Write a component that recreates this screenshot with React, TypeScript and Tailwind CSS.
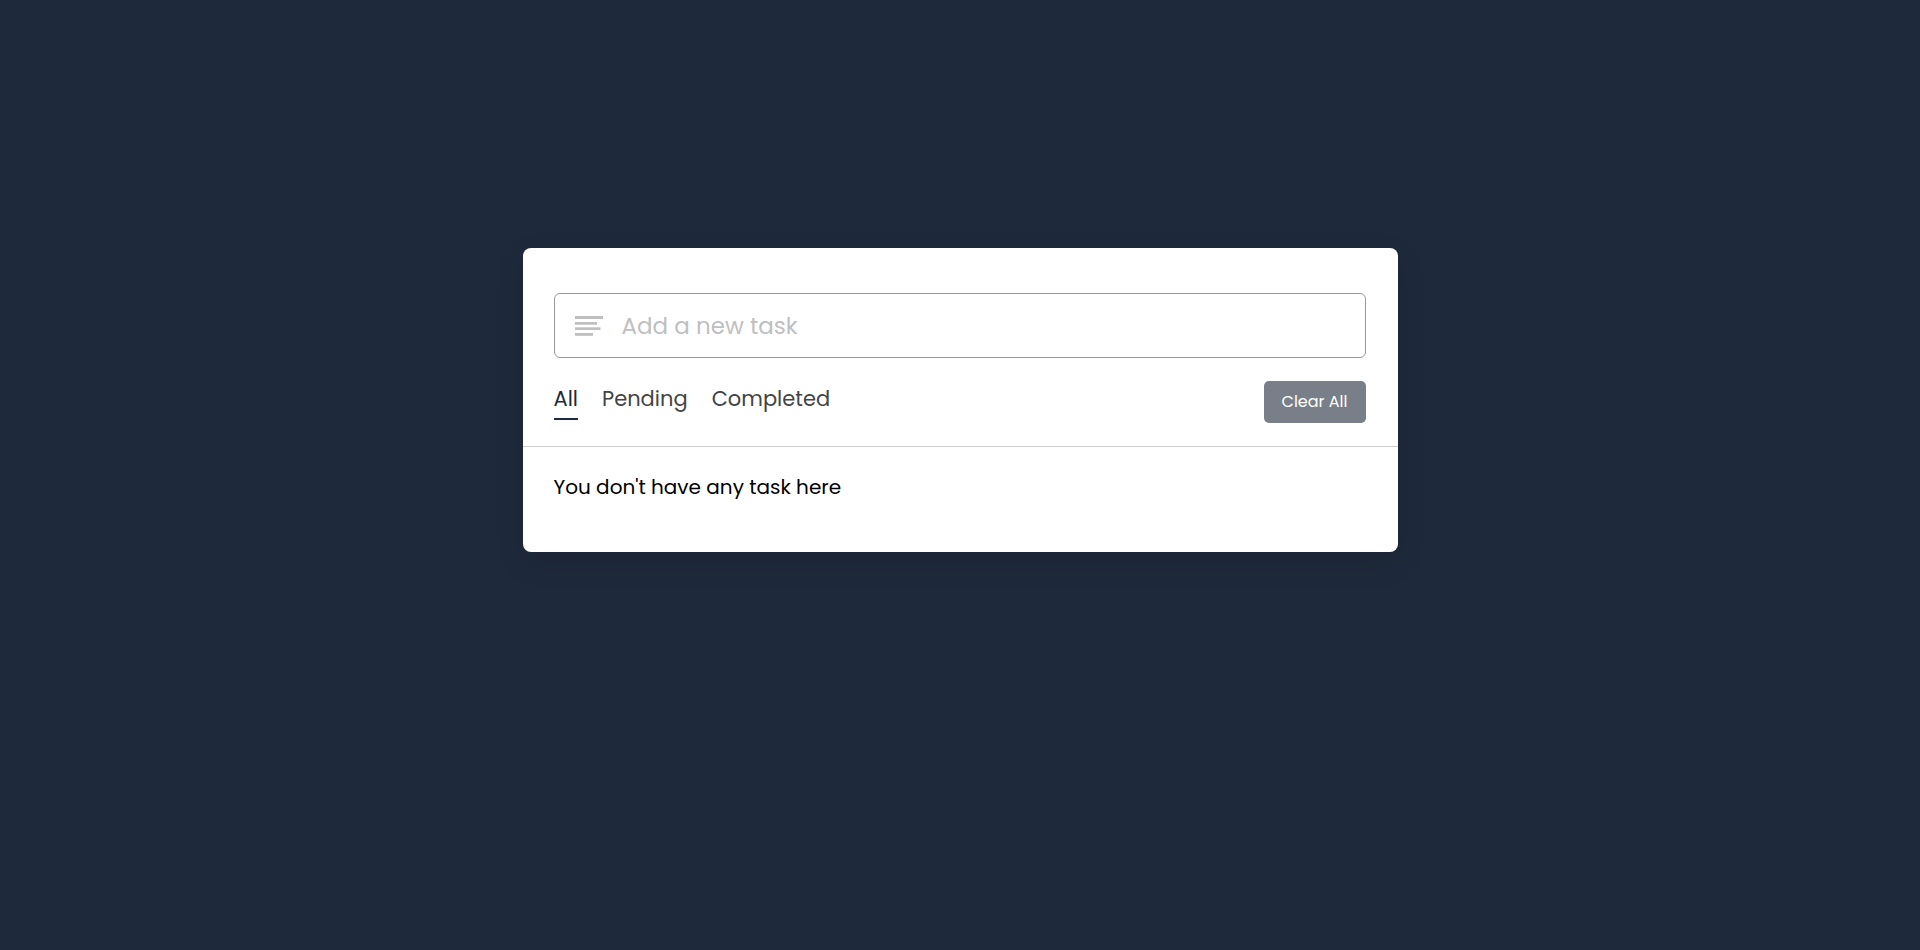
import { useState } from "react";

const filters = ["All", "Pending", "Completed"];

function LinesIcon() {
  return (
    <svg
      width="28"
      height="20"
      viewBox="0 0 28 20"
      fill="#bfbfbf"
      aria-hidden="true"
      className="pointer-events-none absolute left-[21px] top-[23px]"
    >
      <rect x="0" y="0" width="28" height="3" />
      <rect x="0" y="6" width="22" height="2.7" />
      <rect x="0" y="11.3" width="25.5" height="2.7" />
      <rect x="0" y="17" width="18" height="2.8" />
    </svg>
  );
}

export default function App() {
  const [active, setActive] = useState("All");
  const [task, setTask] = useState("");

  return (
    <main className="min-h-screen bg-[#1e293b] px-4 pt-[248px] font-['Poppins','Inter',sans-serif]">
      <section className="mx-auto max-w-[875px] rounded-[8px] bg-white pb-[47px] pt-[45px] shadow-[0_10px_30px_rgba(0,0,0,0.1)]">
        <div className="pl-[31px] pr-8">
          <div className="relative">
            <LinesIcon />
            <input
              type="text"
              aria-label="Add a new task"
              value={task}
              onChange={(e) => setTask(e.target.value)}
              placeholder="Add a new task"
              className="block h-[65px] w-full rounded-[6px] border border-[#999] pl-[67px] pr-5 text-[23px] outline-none placeholder:text-[#bfbfbf]"
            />
          </div>
        </div>
        <div className="flex items-start justify-between border-b border-[#ccc] py-[23px] pl-[31px] pr-8">
          <div className="flex gap-6">
            {filters.map((name) => (
              <button
                key={name}
                type="button"
                onClick={() => setActive(name)}
                aria-pressed={active === name}
                className={
                  active === name
                    ? "h-[39px] border-b-2 border-[#1e293b] pb-[2px] text-[21px] leading-8 text-[#1e293b]"
                    : "h-[39px] border-b-2 border-transparent pb-[2px] text-[21px] leading-8 text-[#444]"
                }
              >
                {name}
              </button>
            ))}
          </div>
          <button
            type="button"
            className="h-[42px] w-[102px] rounded-[5px] bg-[#797f88] text-[16px] text-white"
          >
            Clear All
          </button>
        </div>
        <p className="px-[31px] pt-[22px] text-[20px] leading-9 text-black">You don't have any task here</p>
      </section>
    </main>
  );
}
